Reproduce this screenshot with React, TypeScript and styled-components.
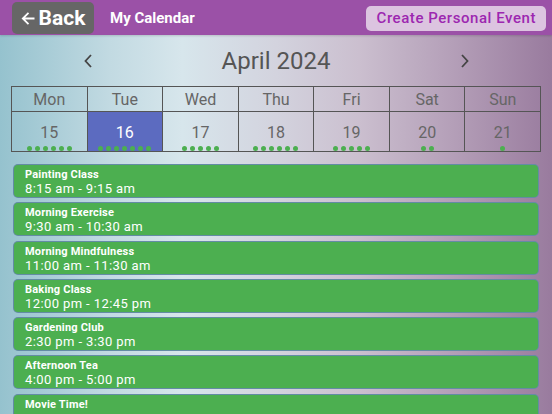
import React from "react";
import styled, { createGlobalStyle } from "styled-components";

const GlobalStyle = createGlobalStyle`
  html, body {
    margin: 0;
    padding: 0;
    height: 100%;
    overflow: hidden;
  }
  body {
    font-family: Roboto, "Liberation Sans", sans-serif;
  }
`;

const Page = styled.div`
  width: 552px;
  height: 414px;
  overflow: hidden;
  background: linear-gradient(
    90deg,
    #95c2ce 0%,
    #c2dae2 20%,
    #d7e6ec 33%,
    #d3d3de 50%,
    #cbbfcf 65%,
    #b49fb8 82%,
    #997b9e 100%
  );
`;

const Header = styled.div`
  height: 35px;
  background: #9b51a7;
  display: flex;
  align-items: center;
  padding: 0 6px 0 12px;
  box-sizing: border-box;
  box-shadow: 0 1px 2px rgba(0, 0, 0, 0.15);
`;

const BackButton = styled.button`
  height: 32px;
  width: 82px;
  margin-top: 1px;
  border: none;
  border-radius: 5px;
  background: #666666;
  color: #ffffff;
  font-family: Roboto, "Liberation Sans", sans-serif;
  font-weight: 700;
  font-size: 21px;
  display: flex;
  align-items: center;
  justify-content: center;
  gap: 4px;
  padding: 0;
`;

const Title = styled.div`
  margin-left: 16px;
  color: #ffffff;
  font-weight: 700;
  font-size: 15px;
  flex: 1;
`;

const CreateButton = styled.button`
  height: 25px;
  padding: 0 10px 0 11px;
  margin-top: 1px;
  border: none;
  border-radius: 5px;
  background: #dcc4e0;
  color: #9c27b0;
  font-family: Roboto, "Liberation Sans", sans-serif;
  font-size: 15px;
  font-weight: 500;
  letter-spacing: 0.55px;
`;

const MonthRow = styled.div`
  height: 51px;
  display: flex;
  align-items: center;
  justify-content: center;
`;

const MonthTitle = styled.div`
  width: 301px;
  text-align: center;
  font-size: 24px;
  color: #555555;
`;

const Chevron = styled.svg`
  width: 14px;
  height: 14px;
  margin: 0 30px;
`;

const Grid = styled.div`
  margin: 0 11px;
  display: grid;
  grid-template-columns: repeat(7, 1fr);
  border-top: 1px solid #555;
  border-left: 1px solid #555;
`;

const HeadCell = styled.div`
  height: 24px;
  border-right: 1px solid #555;
  border-bottom: 1px solid #555;
  display: flex;
  align-items: center;
  justify-content: center;
  font-size: 16px;
  color: #666666;
`;

const DayCell = styled.div<{ $selected?: boolean }>`
  height: 40px;
  border-right: 1px solid #555;
  border-bottom: 1px solid #555;
  background: ${(p) => (p.$selected ? "#5c6bc0" : "transparent")};
  color: ${(p) => (p.$selected ? "#ffffff" : "#666666")};
  display: flex;
  flex-direction: column;
  align-items: center;
  font-size: 16px;
  padding-top: 11px;
  box-sizing: border-box;
`;

const Dots = styled.div`
  display: flex;
  gap: 3px;
  margin-top: 4px;
`;

const Dot = styled.span`
  width: 5px;
  height: 5px;
  border-radius: 50%;
  background: #4caf50;
`;

const EventList = styled.div`
  margin: 12px 13px 0;
  display: flex;
  flex-direction: column;
  gap: 4.3px;
`;

const EventCard = styled.div`
  height: 34px;
  box-sizing: border-box;
  border: 1px solid rgba(110, 125, 200, 0.7);
  border-radius: 5px;
  background: #4caf50;
  color: #ffffff;
  padding: 3px 11px 0;
`;

const EventName = styled.div`
  font-size: 11px;
  font-weight: 700;
  line-height: 13px;
  letter-spacing: 0.2px;
`;

const EventTime = styled.div`
  font-size: 13px;
  line-height: 15px;
  letter-spacing: 0.4px;
`;

const days = [
  { name: "Mon", date: 15, dots: 6 },
  { name: "Tue", date: 16, dots: 7, selected: true },
  { name: "Wed", date: 17, dots: 5 },
  { name: "Thu", date: 18, dots: 6 },
  { name: "Fri", date: 19, dots: 5 },
  { name: "Sat", date: 20, dots: 2 },
  { name: "Sun", date: 21, dots: 1 },
];

const events = [
  { name: "Painting Class", time: "8:15 am - 9:15 am" },
  { name: "Morning Exercise", time: "9:30 am - 10:30 am" },
  { name: "Morning Mindfulness", time: "11:00 am - 11:30 am" },
  { name: "Baking Class", time: "12:00 pm - 12:45 pm" },
  { name: "Gardening Club", time: "2:30 pm - 3:30 pm" },
  { name: "Afternoon Tea", time: "4:00 pm - 5:00 pm" },
  { name: "Movie Time!", time: "7:00 pm - 9:00 pm" },
];

export default function App() {
  return (
    <Page>
      <GlobalStyle />
      <Header>
        <BackButton>
          <svg width="14" height="15" viewBox="0 0 14 15">
            <path
              d="M13.5 7.5H2M7.5 1.8L1.8 7.5L7.5 13.2"
              stroke="#fff"
              strokeWidth="1.8"
              fill="none"
            />
          </svg>
          Back
        </BackButton>
        <Title>My Calendar</Title>
        <CreateButton>Create Personal Event</CreateButton>
      </Header>

      <MonthRow>
        <Chevron viewBox="0 0 14 14">
          <polyline
            points="9,1 3.5,7 9,13"
            stroke="#444"
            strokeWidth="1.8"
            fill="none"
          />
        </Chevron>
        <MonthTitle>April 2024</MonthTitle>
        <Chevron viewBox="0 0 14 14">
          <polyline
            points="5,1 10.5,7 5,13"
            stroke="#444"
            strokeWidth="1.8"
            fill="none"
          />
        </Chevron>
      </MonthRow>

      <Grid>
        {days.map((d) => (
          <HeadCell key={d.name}>{d.name}</HeadCell>
        ))}
        {days.map((d) => (
          <DayCell key={d.date} $selected={d.selected}>
            {d.date}
            <Dots>
              {Array.from({ length: d.dots }).map((_, i) => (
                <Dot key={i} />
              ))}
            </Dots>
          </DayCell>
        ))}
      </Grid>

      <EventList>
        {events.map((e) => (
          <EventCard key={e.name}>
            <EventName>{e.name}</EventName>
            <EventTime>{e.time}</EventTime>
          </EventCard>
        ))}
      </EventList>
    </Page>
  );
}
